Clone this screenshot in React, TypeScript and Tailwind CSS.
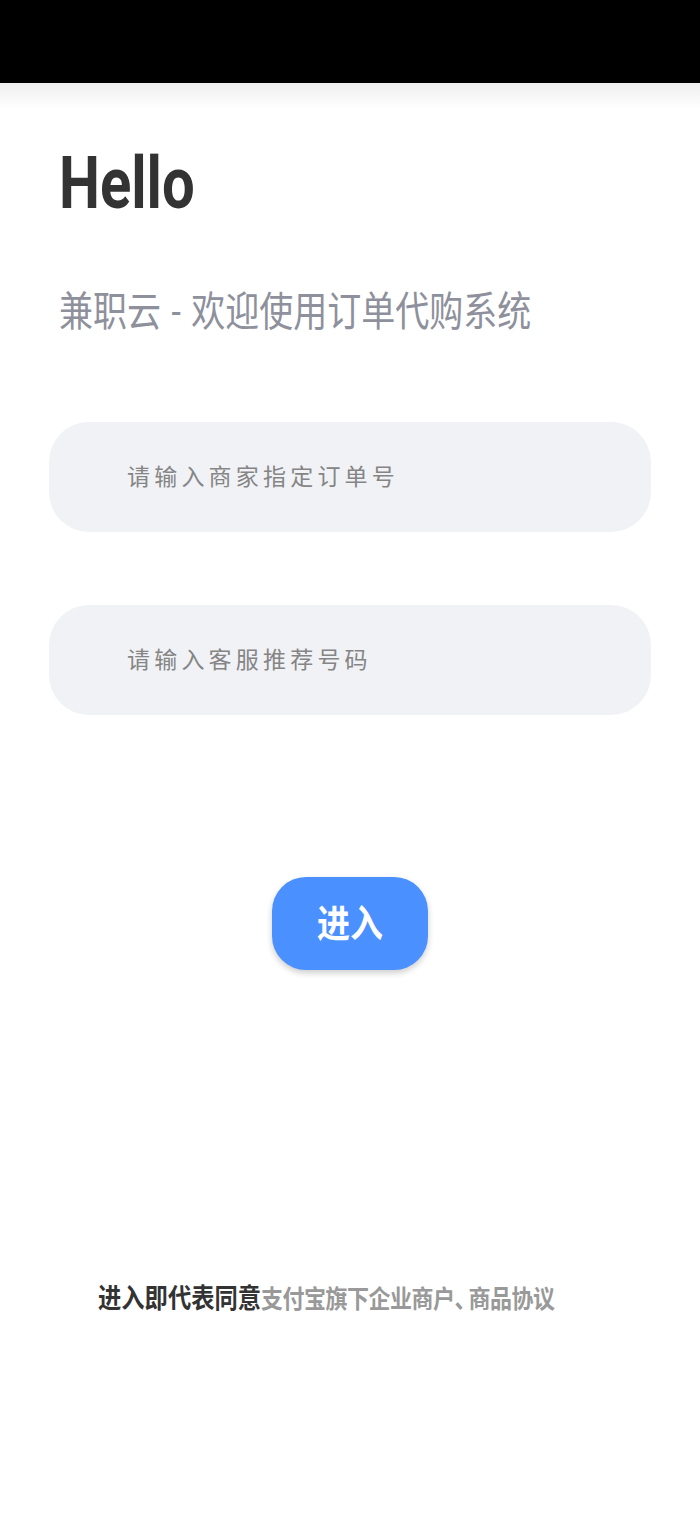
export default function App() {
  return (
    <div className="flex h-[1516px] w-[700px] flex-col overflow-hidden bg-white font-['Roboto','Noto_Sans_CJK_SC',sans-serif]">
      <div className="h-[83px] shrink-0 bg-black" />
      <div className="h-[26px] shrink-0 bg-gradient-to-b from-[#efefef] to-white" />

      <div className="pl-[59px] pt-[34px]">
        <h1 className="h-[80px] origin-left scale-y-[1.26] text-[58px] leading-[80px] font-bold text-[#333333]">Hello</h1>
      </div>
      <p className="mt-[65px] h-[48px] origin-left scale-y-[1.2] pl-[59px] text-[34px] leading-[48px] [word-spacing:2px] text-[#8e909c]">
        兼职云 - 欢迎使用订单代购系统
      </p>

      <div className="mt-[86px] flex flex-col gap-[73px] px-[49px]">
        <input
          placeholder="请输入商家指定订单号"
          className="h-[110px] w-full rounded-[40px] bg-[#f1f2f6] pl-[78px] text-[23px] tracking-[4.2px] outline-none placeholder:text-[#858585]"
        />
        <input
          placeholder="请输入客服推荐号码"
          className="h-[110px] w-full rounded-[40px] bg-[#f1f2f6] pl-[78px] text-[23px] tracking-[4.2px] outline-none placeholder:text-[#858585]"
        />
      </div>

      <div className="mt-[162px] flex justify-center">
        <button className="h-[93px] w-[156px] rounded-[34px] bg-[#4a90ff] text-white shadow-[0_3px_6px_rgba(0,0,0,0.2)]">
          <span className="block scale-y-[1.15] text-[33px] font-bold">进入</span>
        </button>
      </div>

      <p className="mt-[311px] origin-left scale-y-[1.15] pl-[98px] text-[23.3px] leading-[36px] font-bold text-[#333333]">
        进入即代表同意
        <span className="text-[22px] tracking-[-0.5px] text-[#999999]">
          支付宝旗下企业商户<span className="tracking-[-8px]">、</span>商品协议
        </span>
      </p>
    </div>
  );
}
